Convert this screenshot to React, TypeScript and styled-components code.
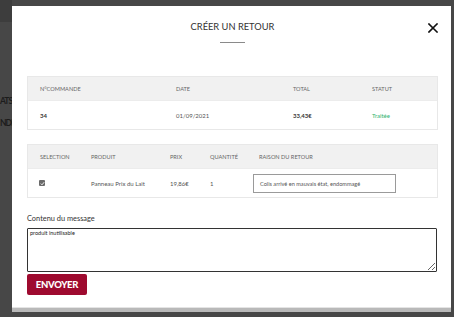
import React from 'react';
import styled, { createGlobalStyle } from 'styled-components';

const GlobalStyle = createGlobalStyle`
    html, body {
        margin: 0;
        padding: 0;
        background: #474747;
        font-family: 'Lato', 'Open Sans', sans-serif;
    }
`

const Screen = styled.div`
    display: flex;
    flex-flow: row nowrap;
    width: 454px;
    height: 317px;
    overflow: hidden;
    background: #474747;
`

const PageEdge = styled.div`
    width: 12px;
    flex-shrink: 0;
    display: flex;
    flex-flow: column nowrap;
    border-top: 22px solid #3d3d3d;

    p {
        margin: 0;
        white-space: nowrap;
        text-align: right;
        color: #1c1c1c;
        font-size: 8.5px;
        font-weight: 700;
        letter-spacing: -1px;
        line-height: 10px;
    }

    p:first-child {
        margin-top: 74px;
    }

    p + p {
        margin-top: 12px;
    }
`

const Modal = styled.section`
    margin-top: 6px;
    width: 439px;
    height: 301px;
    box-sizing: border-box;
    background: #fff;
    padding: 0 13px 0 15px;
    display: flex;
    flex-flow: column nowrap;
    box-shadow: 0 1px 0 #e4e4e4, 0 5px 0 #b9b9b9;
`

const Header = styled.header`
    position: relative;
    display: flex;
    flex-flow: column nowrap;
    align-items: center;
    padding-top: 16px;
    height: 70px;
    box-sizing: border-box;

    h1 {
        margin: 0;
        font-size: 9.3px;
        font-weight: 400;
        color: #333;
        line-height: 10px;
    }

    .bar {
        margin-top: 10px;
        width: 25px;
        height: 1px;
        background: #8a8a8a;
    }
`

const Close = styled.button`
    position: absolute;
    right: -1px;
    top: 16px;
    width: 12px;
    height: 12px;
    padding: 0;
    border: none;
    background: none;
    display: flex;
    align-items: center;
    justify-content: center;
`

const Table = styled.div<{ $cols: string }>`
    border: 1px solid #e8e8e8;
    display: flex;
    flex-flow: column nowrap;

    .row {
        display: grid;
        grid-template-columns: ${p => p.$cols};
        align-items: center;
        padding-left: 12px;
        font-size: 6px;
        color: #555;
    }

    .head {
        height: 23px;
        background: #f1f1f1;
        color: #666;
        text-transform: uppercase;
        font-size: 5.6px;
        border-bottom: 1px solid #ececec;
    }

    .body {
        height: 28px;
    }
`

const Spaced = styled.div<{ $top: number }>`
    margin-top: ${p => p.$top}px;
`

const Strong = styled.span`
    font-weight: 700;
    color: #333;
`

const Status = styled.span`
    color: #2fb36f;
`

const Check = styled.span`
    width: 6px;
    height: 6px;
    border-radius: 1px;
    background: #6a6a6a;
    display: flex;
    align-items: center;
    justify-content: center;
    margin-left: -1px;
`

const ReasonBox = styled.div`
    margin-left: -6px;
    width: 143px;
    height: 19px;
    box-sizing: border-box;
    border: 1px solid #9a9a9a;
    display: flex;
    align-items: center;
    padding-left: 6px;
    font-size: 5.6px;
    color: #555;
`

const Label = styled.label`
    display: block;
    margin-top: 16px;
    font-size: 7.4px;
    color: #333;
    line-height: 9px;
`

const Message = styled.textarea`
    display: block;
    margin-top: 5px;
    width: 410px;
    height: 44px;
    box-sizing: border-box;
    border: 1px solid #333;
    border-radius: 1px;
    padding: 1px 2px;
    font-family: 'Lato', sans-serif;
    font-size: 5.5px;
    color: #222;
    resize: vertical;
    outline: none;
`

const SendButton = styled.button`
    margin-top: 2px;
    width: 60px;
    height: 21px;
    border: none;
    border-radius: 2px;
    background: #9e0a2f;
    color: #fff;
    font-family: 'Lato', sans-serif;
    font-weight: 900;
    font-size: 9.5px;
    letter-spacing: -0.3px;
    padding: 0;
    display: flex;
    align-items: center;
    justify-content: center;
`

export default function App() {
    return (
        <Screen>
            <GlobalStyle />
            <PageEdge>
                <p>ATS</p>
                <p>NDI</p>
            </PageEdge>

            <Modal>
                <Header>
                    <h1>CRÉER UN RETOUR</h1>
                    <div className="bar"></div>
                    <Close aria-label="fermer">
                        <svg width="10" height="10" viewBox="0 0 10 10">
                            <path d="M1 1 L9 9 M9 1 L1 9" stroke="#111" strokeWidth="1.6" strokeLinecap="square" />
                        </svg>
                    </Close>
                </Header>

                <Table $cols="136px 117px 79px 1fr">
                    <div className="row head">
                        <span>N°Commande</span>
                        <span>Date</span>
                        <span>Total</span>
                        <span>Statut</span>
                    </div>
                    <div className="row body">
                        <Strong>34</Strong>
                        <span>01/09/2021</span>
                        <Strong>33,43€</Strong>
                        <Status>Traitée</Status>
                    </div>
                </Table>

                <Spaced $top={14}>
                    <Table $cols="51px 79px 40px 49px 1fr">
                        <div className="row head">
                            <span>Selection</span>
                            <span>Produit</span>
                            <span>Prix</span>
                            <span>Quantité</span>
                            <span>Raison du retour</span>
                        </div>
                        <div className="row body">
                            <Check>
                                <svg width="5" height="5" viewBox="0 0 5 5">
                                    <path d="M0.8 2.6 L2 3.8 L4.2 1.2" stroke="#fff" strokeWidth="0.9" fill="none" />
                                </svg>
                            </Check>
                            <span>Panneau Prix du Lait</span>
                            <span>19,86€</span>
                            <span>1</span>
                            <ReasonBox>Colis arrivé en mauvais état, endommagé</ReasonBox>
                        </div>
                    </Table>
                </Spaced>

                <Label htmlFor="message">Contenu du message</Label>
                <Message id="message" readOnly defaultValue="produit inutilisable" />
                <SendButton>ENVOYER</SendButton>
            </Modal>
        </Screen>
    )
}
